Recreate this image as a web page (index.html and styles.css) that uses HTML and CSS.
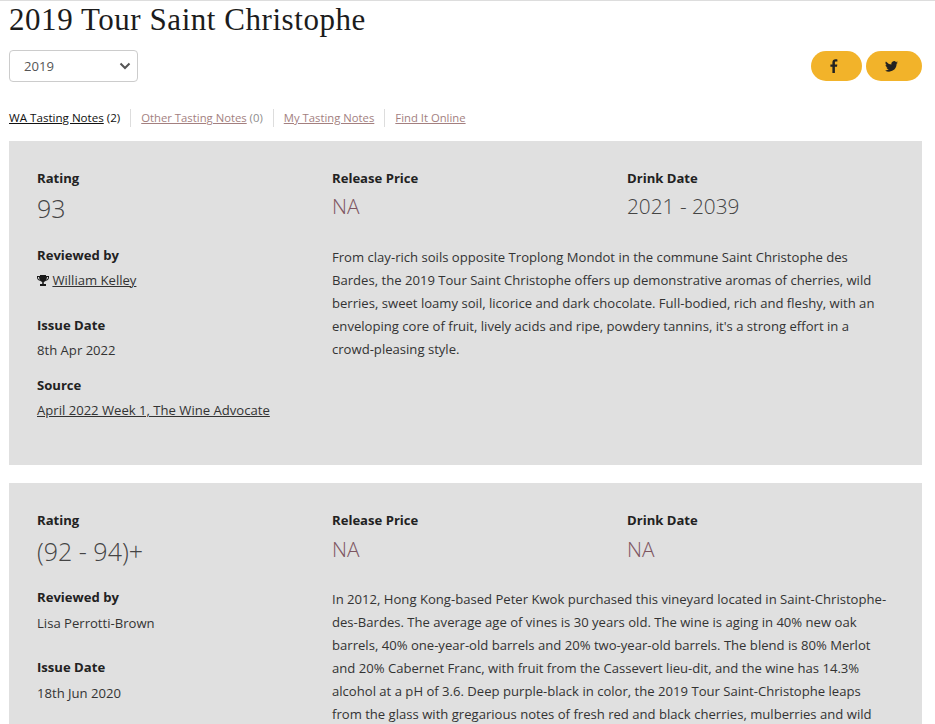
FILE: index.html
```html
<!DOCTYPE html>
<html lang="en">

<head>
    <meta charset="UTF-8">
    <meta name="viewport" content="width=device-width, initial-scale=1.0">
    <title>2019 Tour Saint Christophe</title>
    <link rel="stylesheet" href="styles.css">
</head>

<body>
    <div class="page">
        <h1>2019 Tour Saint Christophe</h1>

        <div class="toolbar">
            <div class="vintage">
                <span>2019</span>
                <svg width="12" height="8" viewBox="0 0 12 8"><path d="M1.5 1.5 6 6l4.500-4.500" fill="none" stroke="#555" stroke-width="2"/></svg>
            </div>
            <div class="share">
                <a class="share-btn fb" href="#">
                    <svg width="8" height="14" viewBox="0 0 8 14"><path d="M2.400 14V7.800H.4V5.400h2V3.600C2.400 1.400 3.700.3 5.500.3c.9 0 1.600.1 1.900.1v2.200H6.100c-1 0-1.200.5-1.200 1.200v1.600h2.400l-.3 2.400H4.900V14z" fill="#222"/></svg>
                </a>
                <a class="share-btn tw" href="#">
                    <svg width="13" height="11" viewBox="0 0 24 20"><path d="M24 2.400c-.9.4-1.800.7-2.800.8 1-.6 1.800-1.600 2.200-2.700-1 .6-2 1-3.100 1.200A4.900 4.900 0 0 0 11.900 6.200 14 14 0 0 1 1.700.9a4.900 4.900 0 0 0 1.500 6.600c-.8 0-1.600-.2-2.200-.6 0 2.400 1.700 4.400 3.900 4.900-.7.2-1.500.2-2.200.1.600 2 2.400 3.400 4.600 3.400A9.900 9.900 0 0 1 0 17.300 14 14 0 0 0 7.500 19.500c9.100 0 14.200-7.700 13.900-14.500.9-.7 1.800-1.600 2.600-2.600z" fill="#222"/></svg>
                </a>
            </div>
        </div>

        <ul class="tabs">
            <li class="active"><a href="#">WA Tasting Notes</a> (2)</li>
            <li><a href="#">Other Tasting Notes</a> (0)</li>
            <li><a href="#">My Tasting Notes</a></li>
            <li><a href="#">Find It Online</a></li>
        </ul>

        <div class="note first">
            <div class="side">
                <div class="field rating">
                    <h4>Rating</h4>
                    <div class="big">93</div>
                </div>
                <div class="field reviewer">
                    <h4>Reviewed by</h4>
                    <p>
                        <svg class="trophy" width="12" height="11" viewBox="0 0 12 11"><path d="M3 0h6v1h3v1.500C12 4.500 10.500 5.500 8.800 5.800 8.300 6.500 7.500 6.900 6.800 7v2H9v2H3V9h2.200V7C4.500 6.900 3.700 6.500 3.200 5.800 1.500 5.500 0 4.500 0 2.500V1h3zM1 2v.5C1 3.600 1.800 4.400 2.800 4.700 2.400 3.900 2.100 3 2 2zm10 0H10c-.1 1-.4 1.900-.8 2.700C10.200 4.400 11 3.600 11 2.500z" fill="#1a1a1a" fill-rule="evenodd"/></svg>
                        <a href="#">William Kelley</a>
                    </p>
                </div>
                <div class="field issue">
                    <h4>Issue Date</h4>
                    <p>8th Apr 2022</p>
                </div>
                <div class="field">
                    <h4>Source</h4>
                    <p><a href="#">April 2022 Week 1, The Wine Advocate</a></p>
                </div>
            </div>
            <div class="main">
                <div class="figures">
                    <div class="field">
                        <h4>Release Price</h4>
                        <div class="mid price">NA</div>
                    </div>
                    <div class="field">
                        <h4>Drink Date</h4>
                        <div class="mid">2021 - 2039</div>
                    </div>
                </div>
                <p class="body-text">From clay-rich soils opposite Troplong Mondot in the commune Saint Christophe des Bardes, the 2019 Tour Saint Christophe offers up demonstrative aromas of cherries, wild berries, sweet loamy soil, licorice and dark chocolate. Full-bodied, rich and fleshy, with an enveloping core of fruit, lively acids and ripe, powdery tannins, it's a strong effort in a crowd-pleasing style.</p>
            </div>
        </div>

        <div class="note second">
            <div class="side">
                <div class="field rating">
                    <h4>Rating</h4>
                    <div class="big">(92 - 94)+</div>
                </div>
                <div class="field reviewer">
                    <h4>Reviewed by</h4>
                    <p>Lisa Perrotti-Brown</p>
                </div>
                <div class="field issue">
                    <h4>Issue Date</h4>
                    <p>18th Jun 2020</p>
                </div>
            </div>
            <div class="main">
                <div class="figures">
                    <div class="field">
                        <h4>Release Price</h4>
                        <div class="mid price">NA</div>
                    </div>
                    <div class="field">
                        <h4>Drink Date</h4>
                        <div class="mid price">NA</div>
                    </div>
                </div>
                <p class="body-text">In 2012, Hong Kong-based Peter Kwok purchased this vineyard located in Saint-Christophe-des-Bardes. The average age of vines is 30 years old. The wine is aging in 40% new oak barrels, 40% one-year-old barrels and 20% two-year-old barrels. The blend is 80% Merlot and 20% Cabernet Franc, with fruit from the Cassevert lieu-dit, and the wine has 14.3% alcohol at a pH of 3.6. Deep purple-black in color, the 2019 Tour Saint-Christophe leaps from the glass with gregarious notes of fresh red and black cherries, mulberries and wild</p>
            </div>
        </div>
    </div>
</body>

</html>
```

FILE: styles.css
```css
* {
    margin: 0;
    padding: 0;
    box-sizing: border-box;
}

html,
body {
    height: 724px;
    overflow: hidden;
}

body {
    background: #fff;
    color: #222;
    font-family: 'Open Sans', sans-serif;
    font-size: 13.1px;
}

a {
    color: inherit;
}

.page {
    border-top: 1px solid #ddd;
    padding: 0 13px 0 9px;
}

h1 {
    font-family: 'Liberation Serif', serif;
    font-weight: 400;
    font-size: 31px;
    line-height: 36px;
    letter-spacing: 0.55px;
    padding-top: 1px;
    color: #1c1c1c;
}

.toolbar {
    display: flex;
    justify-content: space-between;
    align-items: center;
    margin-top: 12px;
}

.vintage {
    width: 129px;
    height: 32px;
    border: 1px solid #ccc;
    border-radius: 4px;
    display: flex;
    justify-content: space-between;
    align-items: center;
    padding: 0 6px 0 14px;
    color: #555;
}

.share {
    display: flex;
    gap: 4px;
}

.share-btn {
    height: 30px;
    background: #f2b32a;
    border-radius: 15px;
    display: flex;
    justify-content: center;
    align-items: center;
    padding-right: 6px;
}

.fb {
    width: 51px;
}

.tw {
    width: 56px;
}

.tabs {
    list-style: none;
    display: flex;
    margin-top: 27px;
    font-size: 11.3px;
    line-height: 18px;
    color: #8d8d8d;
}

.tabs li {
    padding: 0 10px;
    border-right: 1px solid #ddd;
}

.tabs li:first-child {
    padding-left: 0;
}

.tabs li:last-child {
    border-right: none;
}

.tabs a {
    color: #a37f7f;
}

.tabs .active,
.tabs .active a {
    color: #111;
    font-size: 11.6px;
}

.note {
    background: #e0e0e0;
    margin-top: 18px;
    padding: 28px 0 36px 28px;
    display: flex;
}

.note.first {
    margin-top: 14px;
    height: 324px;
}

.side {
    width: 295px;
    flex-shrink: 0;
}

.main {
    flex: 1;
}

.figures {
    display: flex;
}

.figures .field {
    width: 295px;
    margin-bottom: 0;
}

h4 {
    font-size: 13.1px;
    font-weight: 700;
    line-height: 18px;
    color: #222;
}

.field p {
    margin-top: 7px;
    line-height: 18px;
    color: #333;
}

.field {
    margin-bottom: 17px;
}

.big {
    font-size: 25px;
    font-weight: 300;
    line-height: 36px;
    margin-top: 3px;
    color: #444;
}

.mid {
    font-size: 20.8px;
    font-weight: 300;
    line-height: 30px;
    margin-top: 4px;
    color: #444;
}

.price {
    color: #7d5560;
}

.rating {
    margin-bottom: 20px;
}

.reviewer {
    margin-bottom: 27px;
}

.second .big {
    margin-top: 4px;
}

.second .rating {
    margin-bottom: 19px;
}

.second .mid {
    margin-top: 5px;
}

.second .field p {
    margin-top: 8px;
}

.second .reviewer {
    margin-bottom: 26px;
}

.trophy {
    vertical-align: -1px;
}

.body-text {
    margin-top: 25px;
    padding-right: 30px;
    line-height: 23px;
    color: #333;
}

.second .body-text {
    margin-top: 24px;
}
```
